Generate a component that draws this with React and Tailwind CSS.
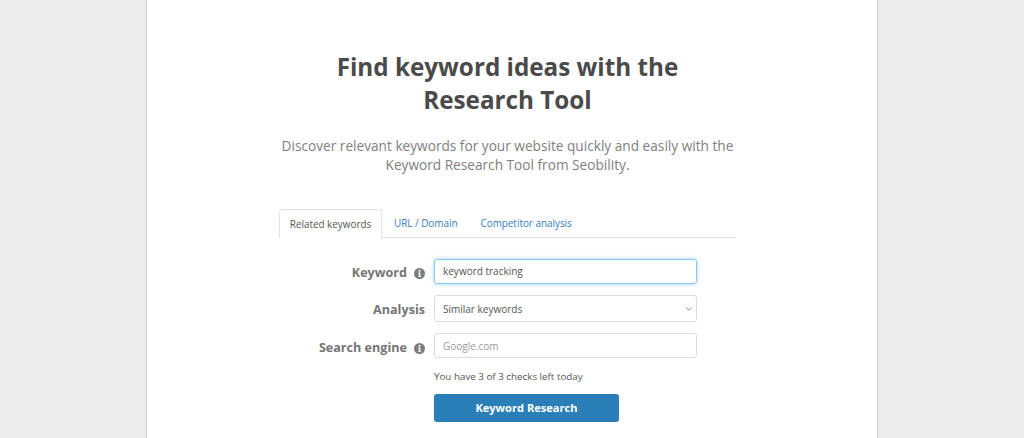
import { ChevronDown } from 'lucide-react';

const InfoIcon = () => (
  <svg viewBox="0 0 12 12" className="w-[11px] h-[11px] ml-[7px] shrink-0">
    <circle cx="6" cy="6" r="6" fill="#7d7d7d" />
    <rect x="5" y="2.2" width="2" height="1.8" fill="#fff" />
    <path d="M4.4 5h2.6v3.6h.8v1H4.4v-1h.9V6h-.9z" fill="#fff" />
  </svg>
);

const Label = ({ children, info }) => (
  <div className="flex items-center justify-end text-[12.6px] font-bold text-[#757575] leading-none">
    <span>{children}</span>
    {info && <InfoIcon />}
  </div>
);

const App = () => {
  return (
    <div className="h-[438px] overflow-hidden bg-[#ebebeb] flex justify-center font-['Open_Sans',sans-serif]">
      <div className="w-[732px] h-full bg-white border-x border-[#d4d4d4] flex flex-col items-center">
        <h1 className="mt-[50px] mr-[9px] w-[420px] text-center text-[24.25px] leading-[33px] font-bold text-[#4a4a4a]">
          Find keyword ideas with the Research Tool
        </h1>
        <p className="mt-[20px] mr-[9px] w-[470px] text-center text-[13.67px] leading-[19px] text-[#808080]">
          Discover relevant keywords for your website quickly and easily with the Keyword Research Tool from Seobility.
        </p>

        <div className="mt-[35px] mr-[9px] w-[457px]">
          <div className="flex border-b border-[#e2e2e2] h-[29px] text-[9.9px]">
            <div className="w-[103px] h-[29px] bg-white border border-b-0 border-[#e2e2e2] rounded-t-[3px] flex items-center justify-center text-[#555]">
              Related keywords
            </div>
            <div className="ml-[12px] h-[28px] flex items-center text-[#2f7fc0]">URL / Domain</div>
            <div className="ml-[23px] h-[28px] flex items-center text-[#2f7fc0]">Competitor analysis</div>
          </div>

          <div className="mt-[21px] grid grid-cols-[146px_263px] gap-x-[9px] text-[10px]">
            <div className="pt-[4px] flex items-center justify-end">
              <Label info>Keyword</Label>
            </div>
            <div className="h-[25px] border border-[#8fc4ee] rounded-[3px] shadow-[0_0_4px_rgba(102,175,233,0.6)] flex items-center px-[8px] text-[#555]">
              keyword tracking
            </div>

            <div className="mt-[11px] pt-[4px] flex items-center justify-end">
              <Label>Analysis</Label>
            </div>
            <div className="mt-[11px] h-[27px] border border-[#dcdcdc] rounded-[3px] flex items-center justify-between pl-[8px] pr-[2px] pt-[1px] text-[#555]">
              <span>Similar keywords</span>
              <ChevronDown className="w-[10px] h-[10px] text-[#777]" />
            </div>

            <div className="mt-[11px] pt-[6px] flex items-center justify-end">
              <Label info>Search engine</Label>
            </div>
            <div className="mt-[11px] h-[25px] border border-[#dcdcdc] rounded-[3px] flex items-center px-[8px] pt-[1px] text-[#999]">
              Google.com
            </div>

            <div className="col-start-2 mt-[12px] h-[14px] leading-[14px] text-[9.8px] text-[#555]">
              You have 3 of 3 checks left today
            </div>

            <div className="col-start-2 mt-[10px]">
              <div className="w-[185px] h-[28px] bg-[#2b7fb9] rounded-[3px] flex items-center justify-center text-white font-bold text-[11.1px]">
                Keyword Research
              </div>
            </div>
          </div>
        </div>
      </div>
    </div>
  );
};

export default App;
